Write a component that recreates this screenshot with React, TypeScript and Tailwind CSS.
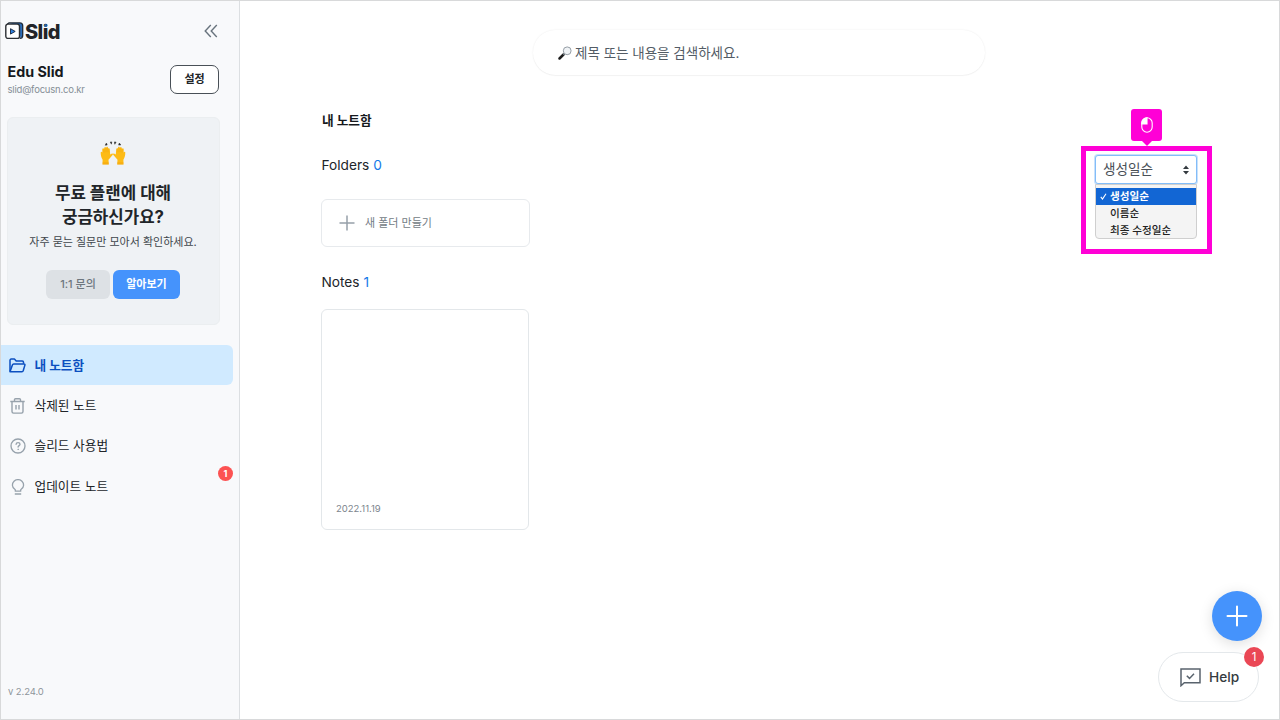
import type { ReactNode } from 'react';

interface NavItem {
  name: string;
  icon: ReactNode;
  active?: boolean;
  badge?: number;
}

function LogoIcon() {
  return (
    <svg width="19" height="18" viewBox="0 0 19 18" fill="none">
      <path d="M3.5 1h11.2a2.8 2.8 0 0 1 2.8 2.8v9.4a3 3 0 0 1-2.2 2.9L14 3.5z" fill="#2b6cb8" />
      <path d="M2.2 2.2 4 .9h10.8a2.9 2.9 0 0 1 2.9 2.9v9.6a2.9 2.9 0 0 1-2.9 2.9" stroke="#1d2836" strokeWidth="1.3" />
      <rect x=".8" y="2.1" width="13.7" height="14.3" rx="2.2" fill="#fff" stroke="#2c2f33" strokeWidth="1.4" />
      <path d="M5.5 6.7 10.2 9.4 5.5 12.1z" fill="#2f80e0" stroke="#14243a" strokeWidth=".9" strokeLinejoin="round" />
    </svg>
  );
}

function FolderIcon() {
  return (
    <svg width="17" height="15" viewBox="0 0 17 15" fill="none" stroke="#0b4fc0" strokeWidth="1.5" strokeLinejoin="round">
      <path d="M1 13.5V2.3C1 1.600 1.5 1 2.2 1h3.2l1.8 2h6.1c.7 0 1.2.5 1.2 1.2v1.6" />
      <path d="M1 13.7 3.4 6.900c.2-.6.6-1 1.300-1h10.200c.8 0 1.200.5 1 1.200l-1.700 5.700c-.2.6-.6.9-1.200.9z" />
    </svg>
  );
}

function TrashIcon() {
  return (
    <svg width="15" height="16" viewBox="0 0 15 16" fill="none" stroke="#97a2ac" strokeWidth="1.4">
      <path d="M.3 3.500h14.400M4.500 3.300V1.800c0-.6.4-1 1-1h4c.6 0 1 .4 1 1v1.500M2 3.700v9.900c0 .9.6 1.500 1.500 1.500h8c.9 0 1.500-.6 1.500-1.500V3.700M6 7v4.600M9 7v4.600" />
    </svg>
  );
}

function QuestionIcon() {
  return (
    <svg width="16" height="16" viewBox="0 0 16 16" fill="none" stroke="#97a2ac" strokeWidth="1.35" strokeLinecap="round">
      <circle cx="8" cy="8" r="7" />
      <path d="M6.100 6.300c.1-1.100.9-1.700 2-1.700 1.100 0 1.900.7 1.900 1.600 0 1.400-1.900 1.400-1.900 2.900" />
      <circle cx="8.1" cy="11.3" r=".35" fill="#97a2ac" strokeWidth=".7" />
    </svg>
  );
}

function BulbIcon() {
  return (
    <svg width="14" height="16" viewBox="0 0 14 16" fill="none" stroke="#97a2ac" strokeWidth="1.3" strokeLinejoin="round">
      <path d="M4.300 12.200V10.700C2.600 9.600 1.400 8.200 1.400 6.200a5.600 5.600 0 0 1 11.200 0c0 2-1.200 3.400-2.900 4.500v1.500zM3.800 15h6.400" />
    </svg>
  );
}

function HandsIcon() {
  return (
    <svg width="26" height="25" viewBox="0 0 26 25">
      <path d="M5.2 4.200 6.400 2l.8 2zM10.200 1l1.600-.1-.4 2.300zM14.400.9l1.700.2-1.300 2.200zM19.300 2l1.500 2-2.200.1z" fill="#2c2c2c" stroke="#2c2c2c" strokeWidth=".5" />
      <g fill="#fdbb16">
        <path id="hand" d="M.7 11.500c0-1 1.300-1 1.600 0V8.200c.1-1.200 1.500-1.200 1.700-.1l.3-1.400c.3-1.100 1.700-.9 1.700.2l.2-.5c.4-.9 1.800-.6 1.800.5l.2.800c.4-.8 1.500-.4 1.600.5l.4 5.300 1.400-.8c1-.5 1.800.4 1 1.300l-4.100 4.700.3 4.700H2.500l.1-4.700C1.200 16.500.7 14.300.7 11.500z" />
        <use href="#hand" transform="matrix(-1 0 0 1 26 0)" />
      </g>
      <path d="M4 8.200v3.300M6 7.200v4M8 7.200v4M22 8.200v3.300M20 7.200v4M18 7.200v4" stroke="#e99a09" strokeWidth=".4" />
      <path d="M2.600 21.200h6.100v2.200H2.600zM17.300 21.200h6.100v2.200h-6.100z" fill="#f1a10d" opacity=".5" />
    </svg>
  );
}

function SearchIcon() {
  return (
    <svg width="14" height="14" viewBox="0 0 14 14" fill="none">
      <path d="m1.500 12.500 4-4" stroke="#1c1c1c" strokeWidth="2.5" strokeLinecap="round" />
      <path d="m5.200 8.800 1.200-1.200" stroke="#77808a" strokeWidth="1.3" />
      <circle cx="9.2" cy="4.8" r="3.9" fill="#f0f3f6" stroke="#8b949c" strokeWidth=".9" />
    </svg>
  );
}

function Sidebar() {
  const navs: NavItem[] = [
    { name: '내 노트함', icon: <FolderIcon />, active: true },
    { name: '삭제된 노트', icon: <TrashIcon /> },
    { name: '슬리드 사용법', icon: <QuestionIcon /> },
    { name: '업데이트 노트', icon: <BulbIcon />, badge: 1 },
  ];

  return (
    <aside className="flex h-full w-[239px] shrink-0 flex-col border-r border-[#dcdfe2] bg-[#f8f9fb]">
      <div className="mt-[18px] flex h-6 items-center justify-between pr-[21px] pl-1">
        <div className="flex items-center gap-px">
          <LogoIcon />
          <span className="relative pt-px text-[20px] leading-6 font-extrabold tracking-[-0.6px] text-[#222529]">
            Slid
            <span className="absolute top-[5px] left-[19px] h-[3px] w-[3px] rounded-full bg-[#2866a8]" />
          </span>
        </div>
        <svg width="14" height="14" viewBox="0 0 14 14" fill="none" stroke="#68737d" strokeWidth="1.4">
          <path d="M6.800 1 1.200 7l5.600 6M12.800 1 7.200 7l5.600 6" />
        </svg>
      </div>

      <div className="mt-[21px] flex h-[30px] items-center justify-between pr-5 pl-[6.500px]">
        <div className="flex flex-col pt-[3px]">
          <p className="h-[18px] text-[14.300px] leading-[18px] font-bold text-[#16191d]">Edu Slid</p>
          <p className="h-[17px] text-[9.500px] leading-[17px] tracking-[-0.2px] text-[#858e96]">slid@focusn.co.kr</p>
        </div>
        <button className="flex h-[29px] w-[49px] items-center justify-center rounded-[7px] border border-[#495057] bg-white text-[11px] leading-none font-bold text-[#212529]">
          설정
        </button>
      </div>

      <div className="mt-[23px] ml-1.5 flex h-[208px] w-[213px] flex-col items-center rounded-[6px] border border-[#ebeef0] bg-[#eff2f5] pr-px">
        <div className="mt-[23px] h-[25px]">
          <HandsIcon />
        </div>
        <p className="mt-[15px] h-12 text-center text-[16.800px] leading-6 font-bold text-[#212529]">
          무료 플랜에 대해
          <br />
          궁금하신가요?
        </p>
        <p className="mt-[4px] h-[18px] text-[11px] leading-[18px] whitespace-nowrap text-[#40464c]">
          자주 묻는 질문만 모아서 확인하세요.
        </p>
        <div className="mt-[19px] flex gap-[3px]">
          <button className="flex h-[29px] w-16 items-center justify-center rounded-[6px] bg-[#dde1e5] text-[11px] leading-none font-medium text-[#6d767e]">
            1:1 문의
          </button>
          <button className="flex h-[29px] w-[67px] items-center justify-center rounded-[6px] bg-[#4593fc] text-[11px] leading-none font-bold text-white">
            알아보기
          </button>
        </div>
      </div>

      <nav className="mt-5 flex flex-col gap-[0.4px]">
        {navs.map((item) => (
          <div
            key={item.name}
            className={`relative mr-[6px] flex h-10 items-center rounded-r-[6px] pt-px text-[12.700px] leading-5 ${
              item.active ? 'bg-[#d0eaff] font-bold text-[#0b4fc0]' : 'text-[#212529]'
            }`}
          >
            <span className="flex w-[33.500px] justify-center">{item.icon}</span>
            {item.name}
            {item.badge && (
              <span className="absolute top-0 right-0 flex h-[15px] w-[15px] items-center justify-center rounded-full bg-[#fc5252] text-[9px] leading-none font-bold text-white">
                {item.badge}
              </span>
            )}
          </div>
        ))}
      </nav>

      <p className="mt-auto mb-[19px] pl-[7px] text-[9.500px] leading-4 tracking-[-0.1px] text-[#8f969c]">v 2.24.0</p>
    </aside>
  );
}

function SortSelect() {
  const options = ['생성일순', '이름순', '최종 수정일순'];

  return (
    <div className="relative w-[102px]">
      <div className="flex h-[29px] items-center justify-between rounded-[3px] border border-[#83bdf8] bg-white pr-[7px] pl-[7px] text-[13.600px] leading-none text-[#495057] shadow-[0_0_0_1px_#c7e1fc]">
        {options[0]}
        <svg width="6" height="10" viewBox="0 0 6 10" fill="#343a40">
          <path d="M0 4 3 .5 6 4zM0 6h6L3 9.500z" />
        </svg>
      </div>
      <ul className="absolute top-[29px] left-0 h-[55px] w-[102px] rounded-b-[4px] border border-[#cfcfcf] bg-[#f4f4f4] pt-[3px] text-[10.600px] font-medium text-[#222]">
        {options.map((item, index) => (
          <li
            key={item}
            className={`flex h-[17px] items-center leading-[17px] whitespace-nowrap ${index === 0 ? 'bg-[#1266d4] font-bold text-white' : ''}`}
          >
            <span className="flex w-3.5 shrink-0 pl-1">
              {index === 0 && (
                <svg width="7" height="7" viewBox="0 0 7 7" fill="none" stroke="#fff" strokeWidth="1.1">
                  <path d="m.8 3.800 1.700 2.300L6 .8" />
                </svg>
              )}
            </span>
            {item}
          </li>
        ))}
      </ul>

      {/* click guide */}
      <div className="absolute -top-[9px] -left-[14px] h-[108px] w-[131px] border-[5px] border-[#ff00d6]" />
      <div className="absolute -top-[46px] left-9 flex h-8 w-[31px] items-center justify-center rounded-[3px] bg-[#ff00d6]">
        <svg width="12" height="16" viewBox="0 0 12 16" fill="none" stroke="#fff" strokeWidth="1.1">
          <rect x=".8" y=".8" width="10.400" height="14.400" rx="5.200" />
          <path d="M6 .8v6.100H.8V6A5.200 5.200 0 0 1 6 .8z" fill="#fff" />
        </svg>
        <svg className="absolute top-[31px] left-[10px]" width="12" height="6" viewBox="0 0 12 6" fill="#ff00d6">
          <path d="M0 0h12L6 6z" />
        </svg>
      </div>
    </div>
  );
}

function Notes() {
  return (
    <main className="flex min-w-0 flex-1 flex-col bg-white">
      <div className="mt-[29px] ml-[293px] flex h-[45px] w-[452px] items-center gap-[3px] rounded-full bg-white pt-px pl-[25px] text-[13.500px] leading-5 text-[#535c65] shadow-[0_0_2px_rgba(0,0,0,0.08),0_1px_1px_rgba(0,0,0,0.03)]">
        <SearchIcon />
        제목 또는 내용을 검색하세요.
      </div>

      <div className="flex flex-col pr-[82px] pl-[81px]">
        <h1 className="mt-9 h-5 pl-px text-[12.700px] leading-5 font-bold text-[#16191d]">내 노트함</h1>
        <div className="mt-6 flex h-[29px] justify-between">
          <h2 className="h-5 pl-[0.500px] text-[13.700px] leading-5 text-[#212529]">
            Folders <span className="text-[#1479e8]">0</span>
          </h2>
          <SortSelect />
        </div>
        <div className="mt-[15px] flex h-12 w-[209px] items-center rounded-[6px] border border-[#e7eaed] pl-[17px] text-[11px] leading-none text-[#727b84]">
          <svg className="mr-[10px]" width="16" height="16" viewBox="0 0 16 16" stroke="#96a0a9" strokeWidth="1.5">
            <path d="M8 .5v15M.5 8h15" />
          </svg>
          새 폴더 만들기
        </div>
        <h2 className="mt-[25px] h-5 pl-[0.500px] text-[13.700px] leading-5 text-[#212529]">
          Notes <span className="text-[#1479e8]">1</span>
        </h2>
        <div className="mt-[17px] flex h-[221px] w-[208px] items-end rounded-[6px] border border-[#e3e7ea] pb-3 pl-[14px] text-[9.500px] leading-4 text-[#7d868e]">
          2022.11.19
        </div>
      </div>
    </main>
  );
}

export default function App() {
  return (
    <div className="relative flex h-[720px] w-[1280px] overflow-hidden border border-[#d8d9da] bg-white font-['Inter','Noto_Sans_CJK_KR',sans-serif]">
      <Sidebar />
      <Notes />

      <button className="absolute top-[590px] left-[1211px] flex h-[50px] w-[50px] items-center justify-center rounded-full bg-[#4593fc] shadow-[0_3px_14px_rgba(0,0,0,0.13)]">
        <svg width="22" height="22" viewBox="0 0 22 22" stroke="#fff" strokeWidth="2" strokeLinecap="round">
          <path d="M11 1.500v19M1.500 11h19" />
        </svg>
      </button>
      <button className="absolute top-[651px] left-[1157px] flex h-[50px] w-[101px] items-center gap-2 rounded-full border border-[#e4e8eb] bg-white pl-[21px] text-[13.700px] leading-5 font-medium text-[#343a40]">
        <svg width="21" height="19" viewBox="0 0 21 19" fill="none" stroke="#59636d" strokeWidth="1.5">
          <path d="M1 17.700V1h19v13.700H4.300zM6.800 7.800l2.700 2.600 4.500-4.600" />
        </svg>
        Help
        <span className="absolute -top-[6px] -right-[6px] flex h-5 w-5 items-center justify-center rounded-full bg-[#ea4755] pt-px text-[11.500px] leading-none font-normal text-white">
          1
        </span>
      </button>
    </div>
  );
}
